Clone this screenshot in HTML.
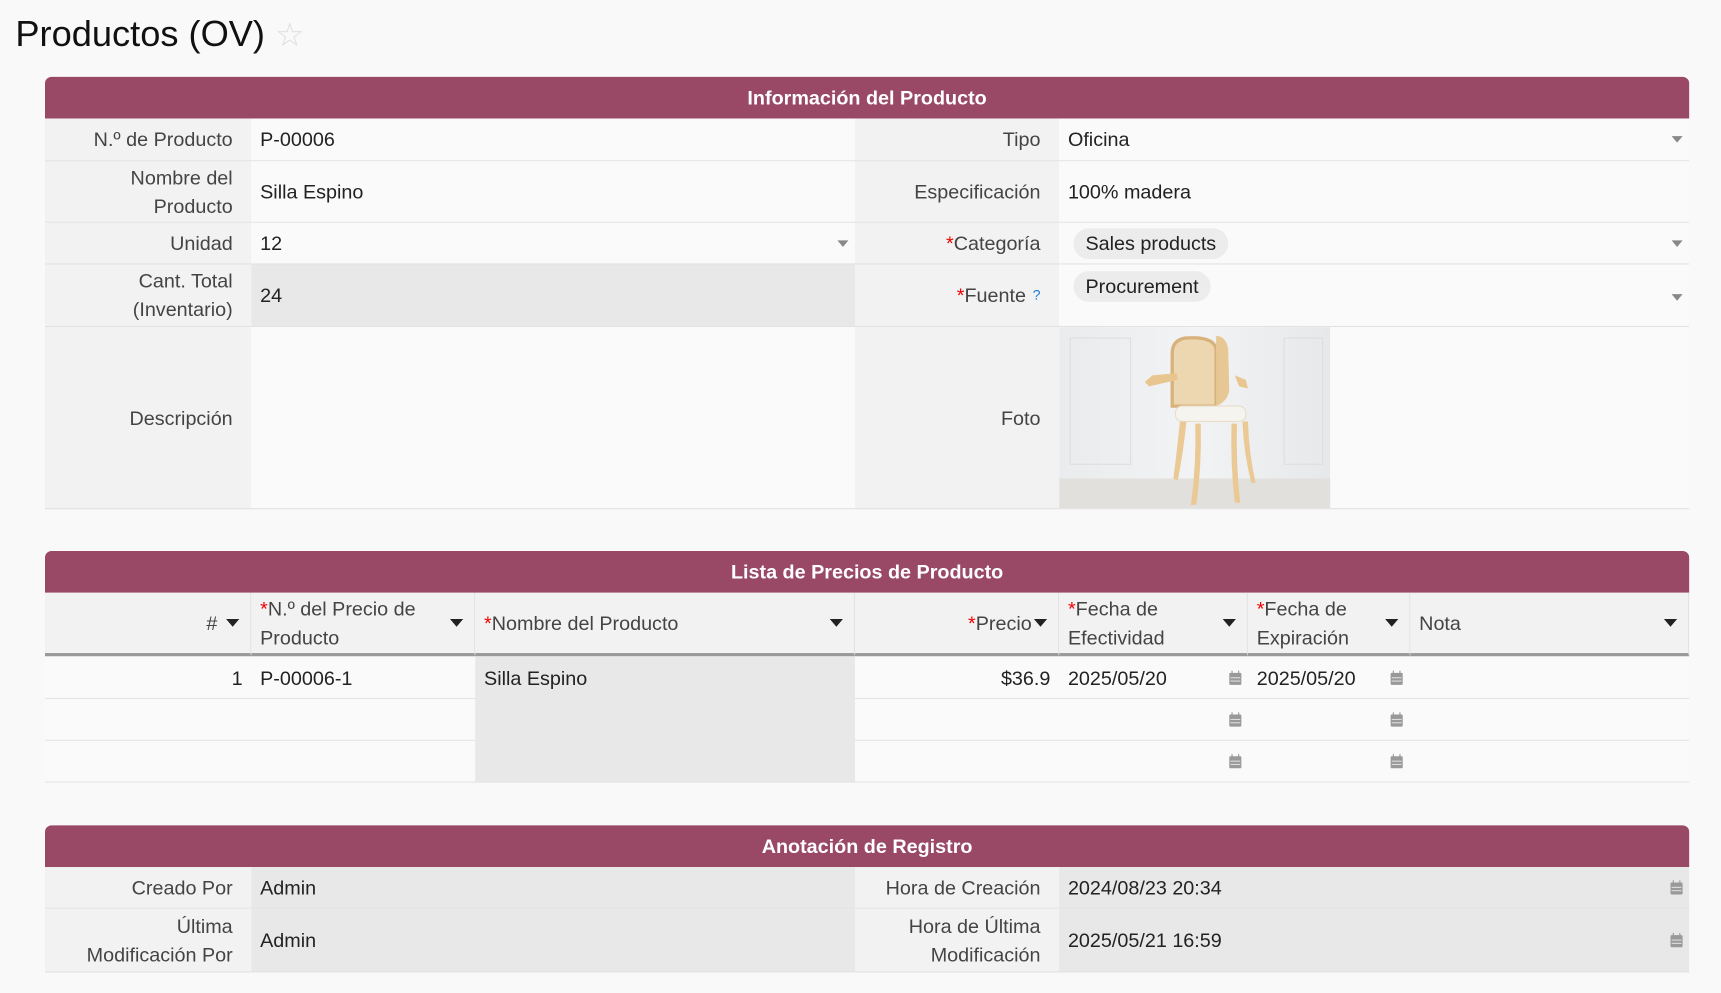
<!DOCTYPE html>
<html><head><meta charset="utf-8"><style>
html,body{margin:0;padding:0;background:#f9f9f9;width:1721px;height:993px;overflow:hidden}
#w{position:absolute;left:0;top:0;width:1568px;height:905px;transform:scale(1.09758);transform-origin:0 0;font-family:"Liberation Sans",sans-serif;color:#222}
.a{position:absolute;box-sizing:border-box}
.t{font-size:33px;left:14px;top:12px;color:#111}
.h{background:#994866;color:#fff;font-weight:bold;font-size:18px;text-align:center;line-height:38px;border-radius:6px 6px 0 0;left:41px;width:1498px;height:38px}
.c{border-bottom:1px solid #e2e2e2;font-size:18px;display:flex;align-items:center;padding:0 8px;line-height:26px}
.l{background:#f2f2f2;justify-content:flex-end;text-align:right;padding-right:17px;color:#444}
.v{background:#fafafa}
.g{background:#e8e8e8}
.r{color:#e00}
.dd{position:absolute;right:6px;width:0;height:0;border-left:5px solid transparent;border-right:5px solid transparent;border-top:6px solid #888}
.hd{position:absolute;right:10px;width:0;height:0;border-left:6px solid transparent;border-right:6px solid transparent;border-top:7px solid #222}
.th{background:#f2f2f2;border-bottom:3px solid #999;border-right:1px solid #e2e2e2;color:#444}
.tag{background:#ececec;border-radius:14px;padding:1px 11px}
.cal{position:absolute;width:11px;height:11px;background:#999;border-radius:1px}
.cal:before{content:"";position:absolute;left:2px;top:-2px;width:1px;height:3px;background:#999;box-shadow:6px 0 #999}
.cal:after{content:"";position:absolute;left:1px;top:4px;width:9px;height:1px;background:#ddd;box-shadow:0 3px #ddd}
</style></head><body><div id="w">
<div class="a t">Productos (OV) <span style="color:#ddd;font-size:30px">☆</span></div>

<div class="a h" style="top:70px">Información del Producto</div>
<div class="a c l" style="left:41px;top:108px;width:188px;height:39px">N.º de Producto</div>
<div class="a c v" style="left:229px;top:108px;width:550px;height:39px">P-00006</div>
<div class="a c l" style="left:779px;top:108px;width:186px;height:39px">Tipo</div>
<div class="a c v" style="left:965px;top:108px;width:574px;height:39px">Oficina<span class="dd"></span></div>

<div class="a c l" style="left:41px;top:147px;width:188px;height:56px">Nombre del<br>Producto</div>
<div class="a c v" style="left:229px;top:147px;width:550px;height:56px">Silla Espino</div>
<div class="a c l" style="left:779px;top:147px;width:186px;height:56px">Especificación</div>
<div class="a c v" style="left:965px;top:147px;width:574px;height:56px">100% madera</div>

<div class="a c l" style="left:41px;top:203px;width:188px;height:38px">Unidad</div>
<div class="a c v" style="left:229px;top:203px;width:550px;height:38px">12<span class="dd"></span></div>
<div class="a c l" style="left:779px;top:203px;width:186px;height:38px"><span class="r">*</span>Categoría</div>
<div class="a c v" style="left:965px;top:203px;width:574px;height:38px;padding-left:13px"><span class="tag">Sales products</span><span class="dd"></span></div>

<div class="a c l" style="left:41px;top:241px;width:188px;height:57px">Cant. Total<br>(Inventario)</div>
<div class="a c g" style="left:229px;top:241px;width:550px;height:57px">24</div>
<div class="a c l" style="left:779px;top:241px;width:186px;height:57px"><span class="r">*</span>Fuente <span style="color:#1a7fd4;font-size:13px;margin-left:6px">?</span></div>
<div class="a c v" style="left:965px;top:241px;width:574px;height:57px;align-items:flex-start;padding-top:6px;padding-left:13px"><span class="tag">Procurement</span><span class="dd" style="top:27px"></span></div>

<div class="a c l" style="left:41px;top:298px;width:188px;height:166px">Descripción</div>
<div class="a c v" style="left:229px;top:298px;width:550px;height:166px"></div>
<div class="a c l" style="left:779px;top:298px;width:186px;height:166px">Foto</div>
<div class="a c v" style="left:965px;top:298px;width:574px;height:166px"></div>
<svg class="a" style="left:965px;top:298px" width="247" height="165" viewBox="0 0 247 165">
<defs><linearGradient id="bg" x1="0" y1="0" x2="1" y2="0"><stop offset="0" stop-color="#e9ebed"/><stop offset=".5" stop-color="#f2f3f4"/><stop offset="1" stop-color="#e6e8ea"/></linearGradient></defs>
<rect width="247" height="165" fill="url(#bg)"/>
<rect x="0" y="138" width="247" height="27" fill="#e2e0dc"/>
<rect x="10" y="10" width="55" height="115" fill="none" stroke="#dcdfe2"/>
<rect x="205" y="10" width="35" height="115" fill="none" stroke="#dcdfe2"/>
<path d="M143 72 l0 -50 q0 -14 -28 -12 q-12 2 -12 14 l0 48 z" fill="#edd7b0" stroke="#d8b27c" stroke-width="3"/>
<path d="M143 72 q10 -4 12 -14 l-1 -38 q-2 -12 -11 -12 z" fill="#e7c894"/>
<path d="M107 42 l-22 2 l-7 6 l4 4 l26 -6 z" fill="#e9c58f"/>
<path d="M160 44 l10 4 l2 8 l-8 -2 z" fill="#e9c58f"/>
<rect x="106" y="72" width="64" height="14" rx="6" fill="#f6f4ef" stroke="#e8ddc8"/>
<path d="M110 86 q-3 30 -6 52 l4 2 q5 -25 8 -54 z M167 86 q1 28 8 56 l4 0 q-6 -26 -7 -56 z M124 88 q1 38 -4 74 l5 0 q5 -36 4 -74 z M157 88 q-1 38 3 72 l5 0 q-4 -34 -3 -72 z" fill="#ebc995"/>
</svg>

<div class="a h" style="top:502px">Lista de Precios de Producto</div>
<div class="a c th" style="left:41px;top:540px;width:188px;height:58px;justify-content:flex-end;padding-right:30px">#<span class="hd"></span></div>
<div class="a c th" style="left:229px;top:540px;width:204px;height:58px"><span><span class="r">*</span>N.º del Precio de<br>Producto</span><span class="hd"></span></div>
<div class="a c th" style="left:433px;top:540px;width:346px;height:58px"><span class="r">*</span>Nombre del Producto<span class="hd"></span></div>
<div class="a c th" style="left:779px;top:540px;width:186px;height:58px;justify-content:flex-end;padding-right:24px"><span class="r">*</span>Precio<span class="hd"></span></div>
<div class="a c th" style="left:965px;top:540px;width:172px;height:58px"><span><span class="r">*</span>Fecha de<br>Efectividad</span><span class="hd"></span></div>
<div class="a c th" style="left:1137px;top:540px;width:148px;height:58px"><span><span class="r">*</span>Fecha de<br>Expiración</span><span class="hd"></span></div>
<div class="a c th" style="left:1285px;top:540px;width:254px;height:58px">Nota<span class="hd"></span></div>

<div class="a c v" style="left:41px;top:598px;width:1498px;height:39px"></div>
<div class="a c v" style="left:41px;top:637px;width:1498px;height:38px"></div>
<div class="a c v" style="left:41px;top:675px;width:1498px;height:38px"></div>
<div class="a g" style="left:433px;top:598px;width:346px;height:114px"></div>
<div class="a c" style="left:41px;top:598px;width:188px;height:39px;justify-content:flex-end;border:0">1</div>
<div class="a c" style="left:229px;top:598px;width:204px;height:39px;border:0">P-00006-1</div>
<div class="a c" style="left:433px;top:598px;width:346px;height:39px;border:0">Silla Espino</div>
<div class="a c" style="left:779px;top:598px;width:186px;height:39px;justify-content:flex-end;border:0">$36.9</div>
<div class="a c" style="left:965px;top:598px;width:172px;height:39px;border:0">2025/05/20</div>
<div class="a c" style="left:1137px;top:598px;width:148px;height:39px;border:0">2025/05/20</div>
<div class="cal" style="left:1120px;top:613px"></div><div class="cal" style="left:1267px;top:613px"></div>
<div class="cal" style="left:1120px;top:651px"></div><div class="cal" style="left:1267px;top:651px"></div>
<div class="cal" style="left:1120px;top:689px"></div><div class="cal" style="left:1267px;top:689px"></div>

<div class="a h" style="top:752px">Anotación de Registro</div>
<div class="a c l" style="left:41px;top:790px;width:188px;height:38px">Creado Por</div>
<div class="a c g" style="left:229px;top:790px;width:550px;height:38px">Admin</div>
<div class="a c l" style="left:779px;top:790px;width:186px;height:38px">Hora de Creación</div>
<div class="a c g" style="left:965px;top:790px;width:574px;height:38px">2024/08/23 20:34</div>
<div class="a c l" style="left:41px;top:828px;width:188px;height:58px">Última<br>Modificación Por</div>
<div class="a c g" style="left:229px;top:828px;width:550px;height:58px">Admin</div>
<div class="a c l" style="left:779px;top:828px;width:186px;height:58px">Hora de Última<br>Modificación</div>
<div class="a c g" style="left:965px;top:828px;width:574px;height:58px">2025/05/21 16:59</div>
<div class="cal" style="left:1522px;top:804px"></div>
<div class="cal" style="left:1522px;top:852px"></div>
</div></body></html>
